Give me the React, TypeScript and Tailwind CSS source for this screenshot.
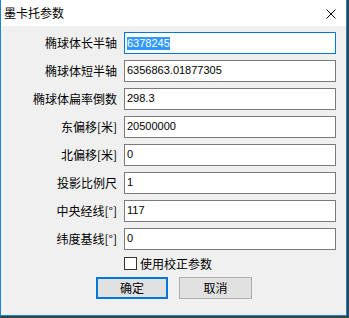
import React from "react";

const cjk = { fontFamily: '"Noto Sans CJK SC", "Microsoft YaHei", sans-serif' };
const latin = { fontFamily: '"Liberation Sans", Arial, "Noto Sans CJK SC", sans-serif' };

const rows: { label: string; value: string }[] = [
  { label: "椭球体长半轴", value: "6378245" },
  { label: "椭球体短半轴", value: "6356863.01877305" },
  { label: "椭球体扁率倒数", value: "298.3" },
  { label: "东偏移[米]", value: "20500000" },
  { label: "北偏移[米]", value: "0" },
  { label: "投影比例尺", value: "1" },
  { label: "中央经线[°]", value: "117" },
  { label: "纬度基线[°]", value: "0" },
];

export default function App() {
  return (
    <div className="w-[349px] h-[318px] bg-[#2e4648] overflow-hidden">
      <div className="w-[347px] h-[316px] bg-[#f0f0f0] border-l border-r border-b border-[#1883d7] flex flex-col">
        <div className="h-[26px] bg-white flex items-center relative shrink-0">
          <span className="ml-[3px] text-[12px] leading-none text-black" style={cjk}>
            墨卡托参数
          </span>
          <svg
            className="absolute left-[325px] top-[9px]"
            width="10"
            height="10"
            viewBox="0 0 10 10"
          >
            <path d="M0.5 0.5 L9.5 9.5 M9.5 0.5 L0.5 9.5" stroke="#000" strokeWidth="1" />
          </svg>
        </div>
        <div className="flex flex-col pt-[6px]">
          <div className="flex flex-col gap-[6px]">
            {rows.map((r, i) => (
              <div key={i} className="flex items-center h-[22px]">
                <div
                  className="w-[116px] text-right text-[12px] leading-none text-black"
                  style={cjk}
                >
                  {r.label}
                </div>
                <div
                  className={
                    "ml-[7px] w-[212px] h-[22px] bg-white border flex items-center pl-[2px] " +
                    (i === 0 ? "border-[#0078d7]" : "border-[#7a7a7a]")
                  }
                >
                  {i === 0 ? (
                    <span
                      className="bg-[#3399ff] text-white text-[11px] leading-[12px] px-[0px] pb-[1px]"
                      style={latin}
                    >
                      {r.value}
                    </span>
                  ) : (
                    <span className="text-black text-[11px] leading-none pb-[1px]" style={latin}>
                      {r.value}
                    </span>
                  )}
                </div>
              </div>
            ))}
          </div>
          <div className="flex items-center mt-[7px] h-[13px] pl-[123px]">
            <div className="w-[13px] h-[13px] border border-[#333333] bg-white" />
            <span className="ml-[3px] text-[12px] leading-none text-black" style={cjk}>
              使用校正参数
            </span>
          </div>
          <div className="flex mt-[7px] pl-[95px] gap-[11px]">
            <div
              className="w-[72px] h-[22px] border-2 border-[#0078d7] bg-[#e1e1e1] flex items-center justify-center text-[12px] leading-none text-black"
              style={cjk}
            >
              确定
            </div>
            <div
              className="w-[73px] h-[22px] border border-[#adadad] bg-[#e1e1e1] flex items-center justify-center text-[12px] leading-none text-black"
              style={cjk}
            >
              取消
            </div>
          </div>
        </div>
      </div>
    </div>
  );
}
